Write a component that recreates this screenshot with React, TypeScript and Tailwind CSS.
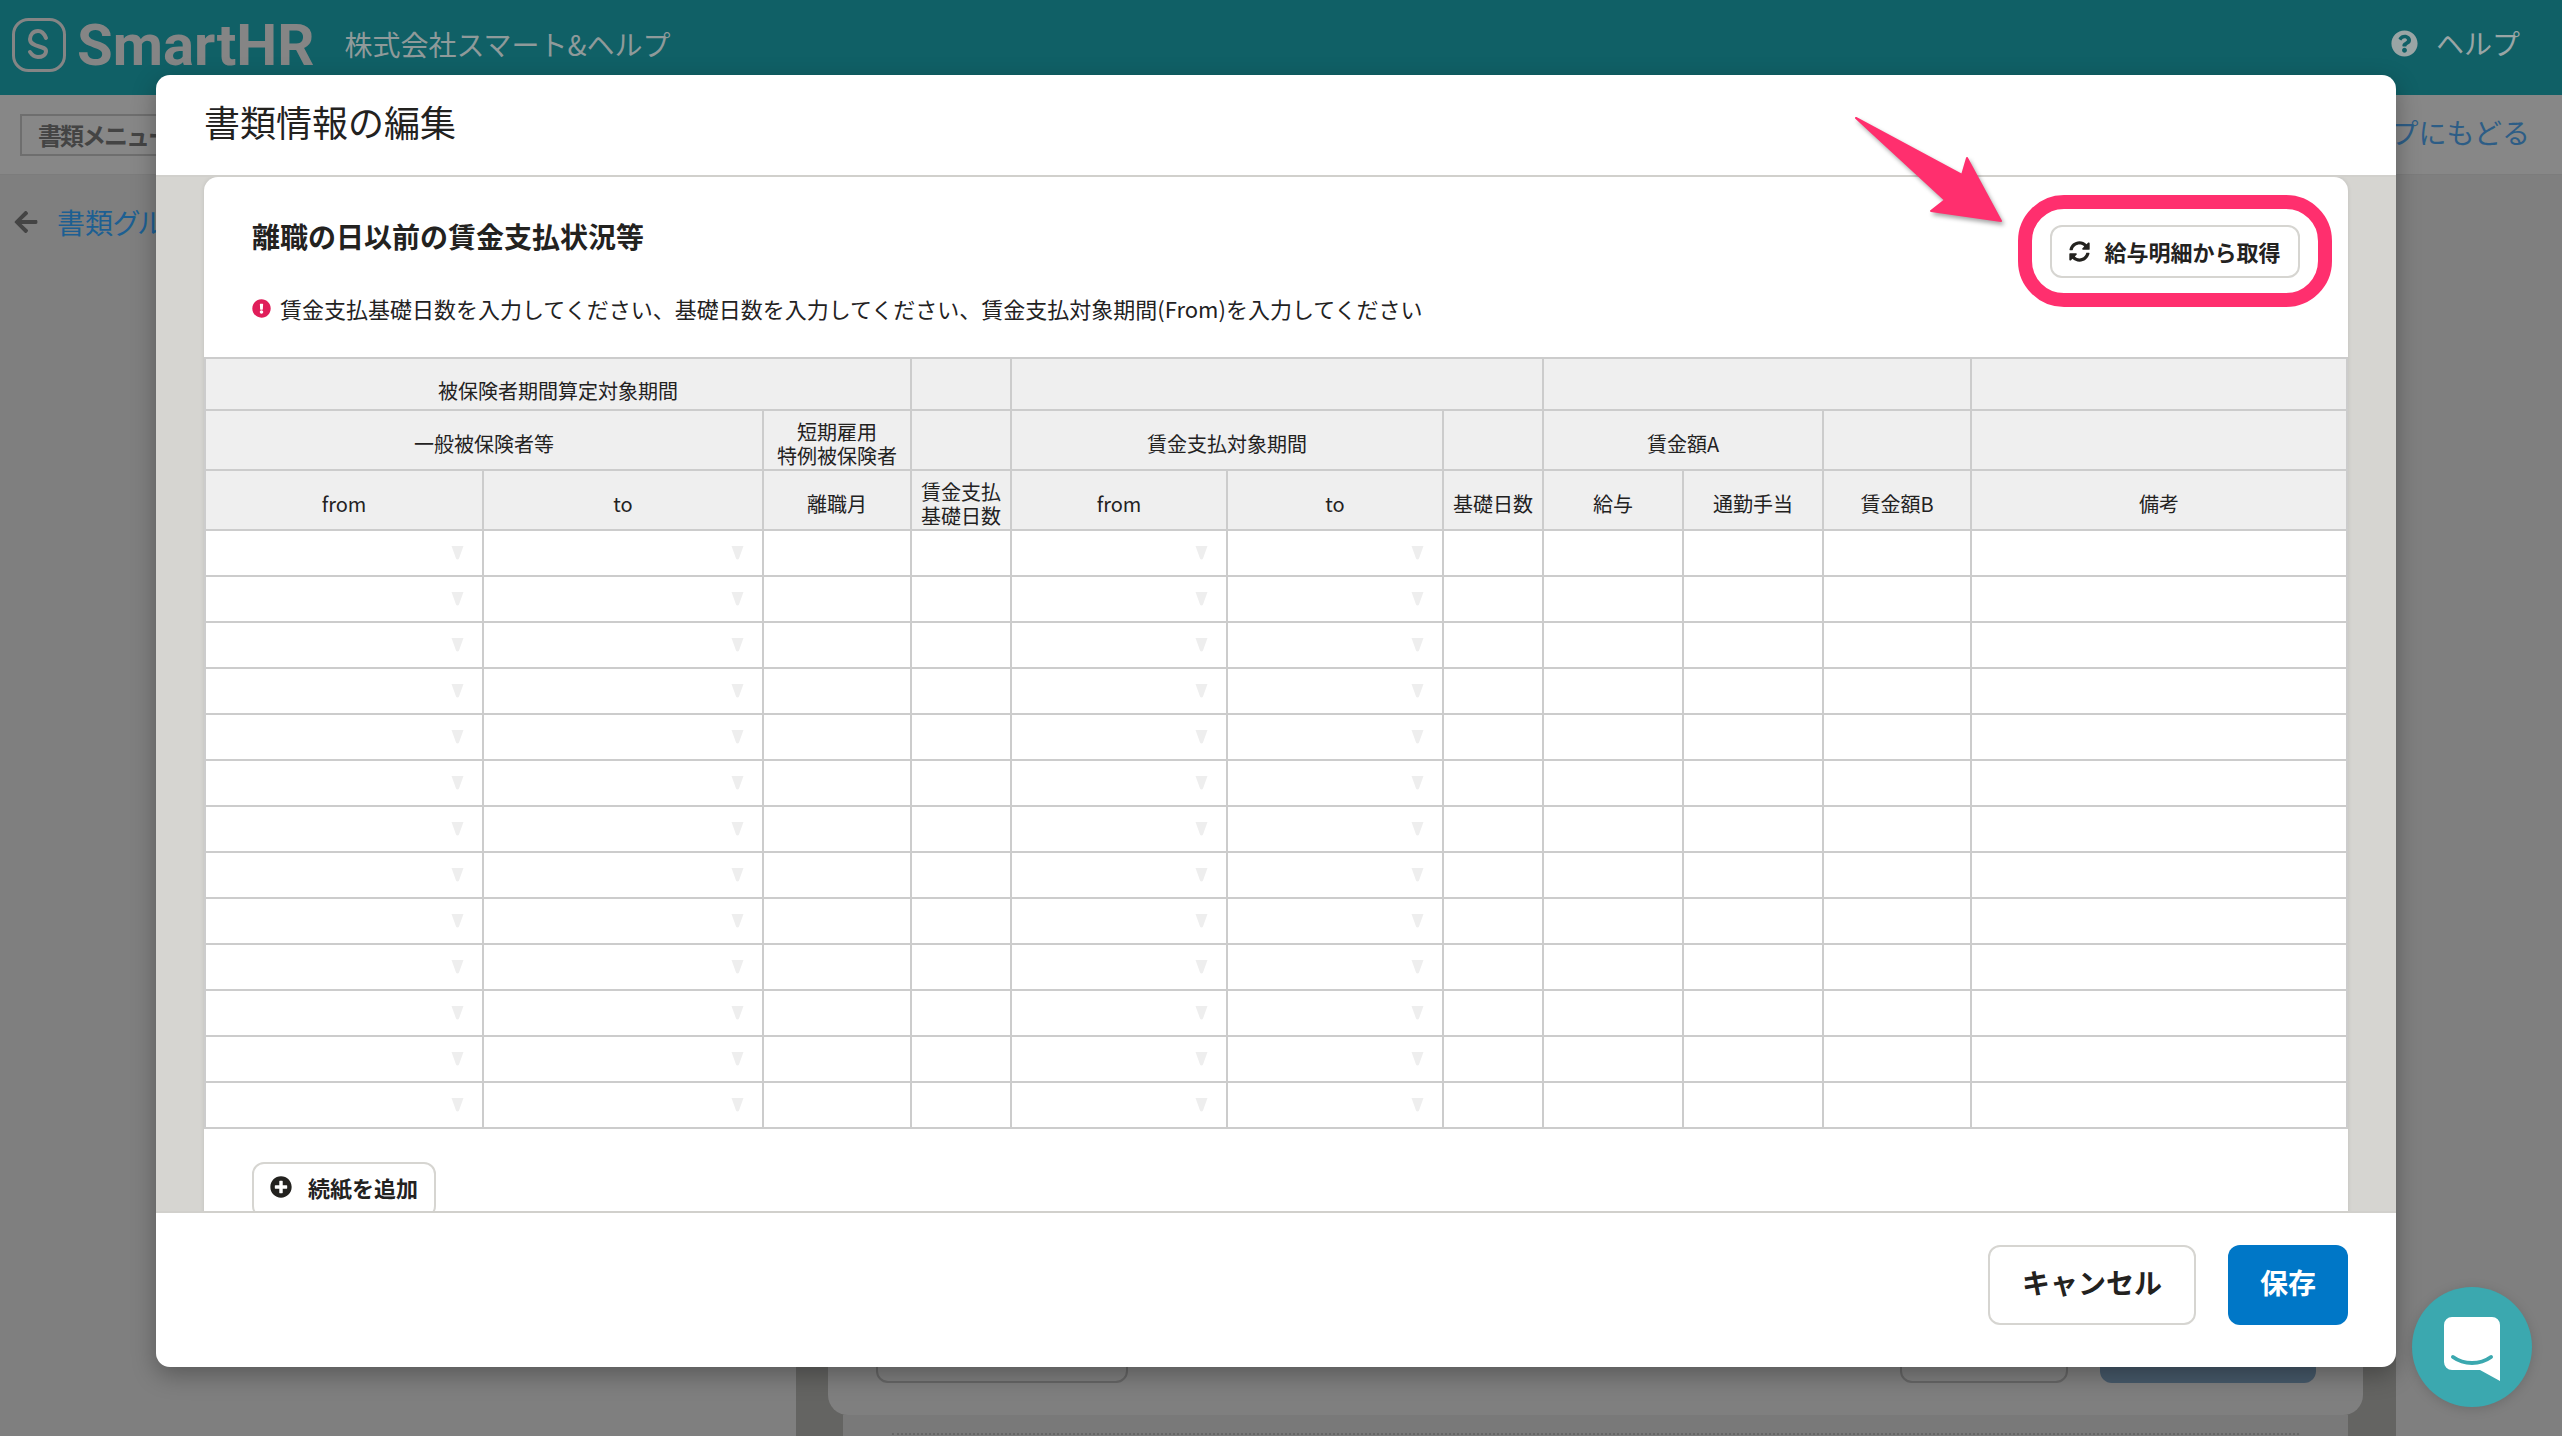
import React from 'react';
import { FaArrowLeft, FaExclamationCircle, FaPlusCircle, FaQuestionCircle, FaSyncAlt } from 'react-icons/fa';

const colWidths = [278, 280, 148, 100, 216, 216, 100, 140, 140, 148, 376];
const selectCols = [0, 1, 4, 5];
const rows = Array.from({ length: 13 }, (_, i) => i);

const thClass = 'border-2 border-[#cccccc] bg-[#efefef] p-0 pt-[7px] text-center align-middle text-[20px] leading-[24px] font-normal text-[#23221f]';
const topThClass = 'border-2 border-[#cccccc] bg-[#efefef] p-0 pt-[14px] text-center align-middle text-[20px] leading-[24px] font-normal text-[#23221f]';

const Logo: React.FC = () => (
  <div className="flex items-center gap-[11px]">
    <svg width="54" height="54" viewBox="0 0 54 54" fill="none" stroke="#858585">
      <rect x="1.500" y="1.500" width="51" height="51" rx="15" strokeWidth="3" />
      <path d="M34 20C32 15 29 13 26 13C21 13 18 17 18 21C18 30 34 27 34 33C34 37 30 39 26 39C23 39 20 37 18 34" strokeWidth="4" strokeLinecap="round" />
    </svg>
    <span className="font-['Roboto',sans-serif] text-[58px] leading-[54px] font-bold text-[#858585]">SmartHR</span>
  </div>
);

const SelectMark: React.FC = () => (
  <div className="flex h-full items-center justify-end pr-[18px] pb-[1px]">
    <svg width="13" height="14" viewBox="0 0 13 14" fill="#eeeeee">
      <path d="M0.500 0h12l-4.500 12.500a1.600 1.600 0 0 1-3 0z" />
    </svg>
  </div>
);

const ChatIcon: React.FC = () => (
  <svg width="56" height="64" viewBox="0 0 56 64" fill="none">
    <path d="M8 0h40a8 8 0 0 1 8 8v56l-20-11H8a8 8 0 0 1-8-8V8a8 8 0 0 1 8-8z" fill="#ffffff" />
    <path d="M9 40c11 8 27 8 38 0" stroke="#3ba8af" strokeWidth="4" strokeLinecap="round" />
  </svg>
);

const PageBehind: React.FC = () => (
  <div className="flex h-full flex-col bg-[#7f7f7f]">
    <header className="flex h-[95px] shrink-0 items-center justify-between bg-[#106066] pr-[42px] pb-[6px] pl-[12px]">
      <div className="flex items-center gap-[30px]">
        <Logo />
        <span className="pb-[2px] text-[28px] text-[#8f9a9a]">株式会社スマート&ヘルプ</span>
      </div>
      <div className="flex items-center gap-[18px] pb-[3px] text-[28px] text-[#9aa5a5]">
        <FaQuestionCircle size={27} />
        <span>ヘルプ</span>
      </div>
    </header>
    <div className="flex h-[80px] shrink-0 items-center justify-between border-b border-[#7c7c7c] bg-[#878787] pr-[32px] pl-[20px]">
      <div className="flex h-[42px] w-[200px] items-center border-2 border-[#6e6e6e] pl-[16px] text-[24px] font-bold tracking-[-2px] text-[#444444]">書類メニュー</div>
      <span className="pb-[5px] text-[28px] text-[#2d5d86]">トップにもどる</span>
    </div>
    <div className="flex min-h-0 flex-1">
      <aside className="w-[796px] shrink-0 pt-[26px] pl-[13px]">
        <div className="flex items-center gap-[18px] text-[28px] text-[#1d5f92]">
          <FaArrowLeft size={26} className="text-[#444444]" />
          <span className="[font-feature-settings:'palt']">書類グループ</span>
        </div>
      </aside>
      <main className="flex w-[1600px] flex-col justify-end bg-[#646462] pr-[33px] pl-[32px]">
        <div className="flex h-[120px] items-end justify-between rounded-b-[20px] bg-[#7f7f7f] pr-[47px] pb-[32px] pl-[48px]">
          <div className="h-[60px] w-[252px] rounded-[12px] border-2 border-[#666666]" />
          <div className="flex gap-[32px]">
            <div className="h-[60px] w-[168px] rounded-[12px] border-2 border-[#666666]" />
            <div className="h-[60px] w-[216px] rounded-[12px] bg-[#46596a]" />
          </div>
        </div>
        <div className="mx-[15px] h-[21px] bg-[#797979] px-[49px] pt-[18px]">
          <div className="border-t-2 border-dotted border-[#666666]" />
        </div>
      </main>
      <div className="flex-1" />
    </div>
  </div>
);

const WageTable: React.FC = () => (
  <table className="w-[2142px] table-fixed border-collapse">
    <colgroup>
      {colWidths.map((w, i) => (
        <col key={i} style={{ width: w }} />
      ))}
    </colgroup>
    <thead>
      <tr className="h-[52px]">
        <th colSpan={3} className={topThClass}>被保険者期間算定対象期間</th>
        <th className={topThClass} />
        <th colSpan={3} className={topThClass} />
        <th colSpan={3} className={topThClass} />
        <th className={topThClass} />
      </tr>
      <tr className="h-[60px]">
        <th colSpan={2} className={thClass}>一般被保険者等</th>
        <th className={thClass}>短期雇用<br />特例被保険者</th>
        <th className={thClass} />
        <th colSpan={2} className={thClass}>賃金支払対象期間</th>
        <th className={thClass} />
        <th colSpan={2} className={thClass}>賃金額A</th>
        <th className={thClass} />
        <th className={thClass} />
      </tr>
      <tr className="h-[60px]">
        <th className={thClass}>from</th>
        <th className={thClass}>to</th>
        <th className={thClass}>離職月</th>
        <th className={thClass}>賃金支払<br />基礎日数</th>
        <th className={thClass}>from</th>
        <th className={thClass}>to</th>
        <th className={thClass}>基礎日数</th>
        <th className={thClass}>給与</th>
        <th className={thClass}>通勤手当</th>
        <th className={thClass}>賃金額B</th>
        <th className={thClass}>備考</th>
      </tr>
    </thead>
    <tbody>
      {rows.map(r => (
        <tr key={r} className="h-[46px]">
          {colWidths.map((_, c) => (
            <td key={c} className="h-[46px] border-2 border-[#cccccc] bg-white p-0">
              {selectCols.includes(c) && <SelectMark />}
            </td>
          ))}
        </tr>
      ))}
    </tbody>
  </table>
);

const Modal: React.FC = () => (
  <div className="absolute top-[75px] left-[156px] flex h-[1292px] w-[2240px] flex-col rounded-[14px] bg-white shadow-[0_8px_24px_rgba(0,0,0,0.3)]">
    <div className="flex h-[102px] shrink-0 items-center border-b-2 border-[#d1d0cc] px-[48px] pb-[9px]">
      <h1 className="text-[36px] leading-[50px] font-normal text-[#23221f]">書類情報の編集</h1>
    </div>
    <div className="min-h-0 flex-1 overflow-hidden border-b-2 border-[#d1d0cc] bg-[#d6d5d1] px-[48px]">
      <div className="relative h-[1100px] rounded-t-[14px] bg-white shadow-[0_0_4px_rgba(0,0,0,0.1)]">
        <div className="flex items-start justify-between pt-[39px] pr-[48px] pl-[48px]">
          <h2 className="text-[28px] leading-[40px] font-bold text-[#23221f]">離職の日以前の賃金支払状況等</h2>
          <button className="mt-[9px] flex h-[53px] w-[250px] items-center justify-center gap-[14px] rounded-[12px] border-2 border-[#d6d5d1] bg-white text-[22px] font-bold text-[#23221f]">
            <FaSyncAlt size={21} />
            給与明細から取得
          </button>
        </div>
        <div className="mt-[16px] flex h-[32px] items-center gap-[9px] pb-[3px] pl-[48px] text-[22px] text-[#23221f]">
          <FaExclamationCircle size={19} className="text-[#e01e5a]" />
          <span>賃金支払基礎日数を入力してください、基礎日数を入力してください、賃金支払対象期間(From)を入力してください</span>
        </div>
        <div className="mt-[31px]">
          <WageTable />
        </div>
        <button className="mt-[33px] ml-[48px] flex h-[56px] w-[184px] items-center justify-center gap-[16px] rounded-[12px] border-2 border-[#d6d5d1] bg-white pb-[6px] text-[22px] font-bold text-[#23221f]">
          <FaPlusCircle size={22} />
          続紙を追加
        </button>
        {/* pink annotation ring */}
        <div className="absolute top-[18px] left-[1814px] h-[112px] w-[314px] rounded-[46px] border-[14px] border-[#ff2f6e]" />
      </div>
    </div>
    <div className="flex h-[154px] shrink-0 items-center justify-end gap-[32px] px-[48px] pb-[10px]">
      <button className="h-[80px] w-[208px] rounded-[12px] border-2 border-[#d6d5d1] bg-white pb-[6px] text-[28px] font-bold text-[#23221f]">キャンセル</button>
      <button className="h-[80px] w-[120px] rounded-[12px] bg-[#0077c7] pb-[6px] text-[28px] font-bold text-white">保存</button>
    </div>
    {/* pink annotation arrow */}
    <svg className="absolute top-[35px] left-[1684px] drop-shadow-[2px_3px_2px_rgba(0,0,0,0.35)]" width="180" height="120" viewBox="0 0 180 120">
      <path d="M16 8 122 65 127 48 161 111 91 101 105 90Z" fill="#ff2f6e" stroke="#ff2f6e" strokeWidth="2" strokeLinejoin="round" />
    </svg>
  </div>
);

const App: React.FC = () => (
  <div className="relative h-[1436px] w-[2562px] overflow-hidden font-['Noto_Sans_CJK_JP','Noto_Sans',sans-serif]">
    <PageBehind />
    <Modal />
    <div className="absolute top-[1287px] left-[2412px] flex h-[120px] w-[120px] items-center justify-center rounded-full bg-[#3ba8af] pt-[4px] shadow-[0_2px_12px_rgba(0,0,0,0.15)]">
      <ChatIcon />
    </div>
  </div>
);

export default App;
